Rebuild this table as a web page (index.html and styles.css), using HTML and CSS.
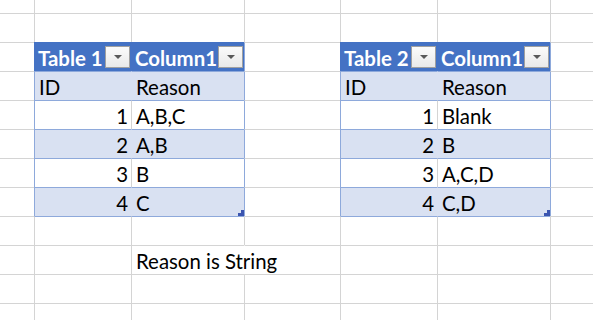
FILE: index.html
```html
<!DOCTYPE html>
<html>
<head>
<meta charset="utf-8">
<link rel="stylesheet" href="styles.css">
</head>
<body>
<div class="sheet">
  <!-- row 0 -->
  <div class="c c0 r0"></div><div class="c r0"></div><div class="c r0"></div><div class="c r0"></div><div class="c r0"></div><div class="c r0"></div><div class="c r0"></div>
  <!-- row 1 -->
  <div class="c c0"></div><div class="c"></div><div class="c"></div><div class="c"></div><div class="c"></div><div class="c"></div><div class="c"></div>
  <!-- row 2 header -->
  <div class="c c0"></div>
  <div class="c hd"><span>Table 1</span><span class="btn"><span class="tri"></span></span></div>
  <div class="c hd"><span>Column1</span><span class="btn"><span class="tri"></span></span></div>
  <div class="c edge"></div>
  <div class="c hd"><span>Table 2</span><span class="btn"><span class="tri"></span></span></div>
  <div class="c hd"><span>Column1</span><span class="btn"><span class="tri"></span></span></div>
  <div class="c edge"></div>
  <!-- row 3 -->
  <div class="c c0"></div>
  <div class="c tb band first">ID</div>
  <div class="c tb band">Reason</div>
  <div class="c edge"></div>
  <div class="c tb band first">ID</div>
  <div class="c tb band">Reason</div>
  <div class="c edge"></div>
  <!-- row 4 -->
  <div class="c c0"></div>
  <div class="c tb first num">1</div>
  <div class="c tb">A,B,C</div>
  <div class="c edge"></div>
  <div class="c tb first num">1</div>
  <div class="c tb">Blank</div>
  <div class="c edge"></div>
  <!-- row 5 -->
  <div class="c c0"></div>
  <div class="c tb band first num">2</div>
  <div class="c tb band">A,B</div>
  <div class="c edge"></div>
  <div class="c tb band first num">2</div>
  <div class="c tb band">B</div>
  <div class="c edge"></div>
  <!-- row 6 -->
  <div class="c c0"></div>
  <div class="c tb first num">3</div>
  <div class="c tb">B</div>
  <div class="c edge"></div>
  <div class="c tb first num">3</div>
  <div class="c tb">A,C,D</div>
  <div class="c edge"></div>
  <!-- row 7 -->
  <div class="c c0"></div>
  <div class="c tb band first num">4</div>
  <div class="c tb band last">C<svg class="handle" width="6" height="6" viewBox="0 0 6 6"><path d="M3 0h3v6h-6v-3h3z"/></svg></div>
  <div class="c edge"></div>
  <div class="c tb band first num">4</div>
  <div class="c tb band last">C,D<svg class="handle" width="6" height="6" viewBox="0 0 6 6"><path d="M3 0h3v6h-6v-3h3z"/></svg></div>
  <div class="c edge"></div>
  <!-- row 8 -->
  <div class="c c0"></div><div class="c below"></div><div class="c below"></div><div class="c"></div><div class="c below"></div><div class="c below"></div><div class="c"></div>
  <!-- row 9 -->
  <div class="c c0"></div><div class="c"></div><div class="c spill">Reason is String</div><div class="c nol"></div><div class="c"></div><div class="c"></div><div class="c"></div>
  <!-- row 10 -->
  <div class="c c0"></div><div class="c"></div><div class="c"></div><div class="c"></div><div class="c"></div><div class="c"></div><div class="c"></div>
  <!-- row 11 -->
  <div class="c c0"></div><div class="c"></div><div class="c"></div><div class="c"></div><div class="c"></div><div class="c"></div><div class="c"></div>
</div>
</body>
</html>
```
FILE: styles.css
```css
html, body {
  margin: 0;
  padding: 0;
  background: #fff;
}
body {
  width: 593px;
  height: 320px;
  overflow: hidden;
  font-family: Lato, "Open Sans", sans-serif;
  font-size: 20.4px;
  color: #000;
}
.sheet {
  display: grid;
  grid-template-columns: 34px 97px 113px 96px 97px 113px 1fr;
  grid-template-rows: 13px repeat(10, 29px) 1fr;
  width: 593px;
  height: 320px;
}
.c {
  box-sizing: border-box;
  border-left: 1px solid #d4d4d4;
  border-top: 1px solid #d4d4d4;
  display: flex;
  align-items: flex-end;
  padding: 0 3px 1px 4px;
  line-height: 1.2;
  white-space: nowrap;
  position: relative;
  min-width: 0;
}
.c0 { border-left: none; }
.r0 { border-top: none; }

.hd {
  background: #4472c4;
  border-left-color: #4472c4;
  border-top-color: #4472c4;
  color: #fff;
  font-weight: bold;
  justify-content: space-between;
  padding-left: 3px;
  padding-right: 1px;
  overflow: hidden;
}
.hd .btn {
  align-self: center;
  flex: none;
  box-sizing: border-box;
  width: 25px;
  height: 22px;
  margin-bottom: -1px;
  border: 1px solid #a0a0a0;
  background: linear-gradient(#fbfbfb, #e9e9e9);
  display: flex;
  align-items: center;
  justify-content: center;
}
.tri {
  width: 0;
  height: 0;
  border-left: 4px solid transparent;
  border-right: 4px solid transparent;
  border-top: 4px solid #595959;
}
.tb {
  border-top-color: #8ea9db;
}
.tb.first {
  border-left-color: #8ea9db;
}
.band {
  background: #d9e1f2;
}
.band:not(.first) {
  border-left-color: #d9e1f2;
}
.edge {
  border-left-color: #8ea9db;
}
.num {
  justify-content: flex-end;
}
.below {
  border-top-color: #8ea9db;
}
.handle {
  position: absolute;
  right: 0;
  bottom: 0;
  fill: #3b55b0;
}
.spill {
  overflow: visible;
  z-index: 1;
}
.nol {
  border-left-color: #fff;
}
```
